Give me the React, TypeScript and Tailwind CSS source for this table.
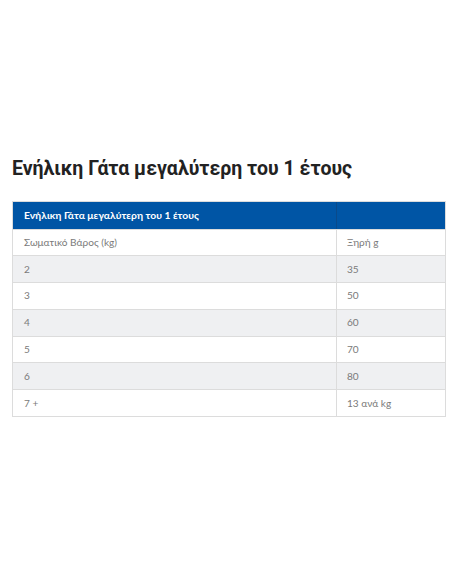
import React from "react";

const rows: [string, string][] = [
  ["2", "35"],
  ["3", "50"],
  ["4", "60"],
  ["5", "70"],
  ["6", "80"],
  ["7 +", "13 ανά kg"],
];

export default function App() {
  return (
    <div className="w-[452px] h-[584px] bg-white overflow-hidden">
      <div className="pt-[157px] px-[12px]">
        <h1
          className="text-[19.5px] leading-[24px] font-bold text-[#222222]"
          style={{ fontFamily: "Roboto, 'Liberation Sans', sans-serif" }}
        >
          Ενήλικη Γάτα μεγαλύτερη του 1 έτους
        </h1>
        <div
          className="mt-[20px] w-[434px] border border-[#dcdcdc]"
          style={{ fontFamily: "Lato, 'Liberation Sans', sans-serif" }}
        >
          <div className="flex h-[26.5px] bg-[#0055a5]">
            <div className="w-[324px] border-r border-[#0a4a8a] flex items-center pl-[11px] text-[10.3px] font-bold text-white">
              Ενήλικη Γάτα μεγαλύτερη του 1 έτους
            </div>
            <div className="flex-1" />
          </div>
          <div className="flex h-[26.8px] bg-white border-t border-[#dcdcdc] text-[10.1px] text-[#7a7a7a]">
            <div className="w-[324px] border-r border-[#dcdcdc] flex items-center pl-[11px]">
              Σωματικό Βάρος (kg)
            </div>
            <div className="flex-1 flex items-center pl-[10px]">Ξηρή g</div>
          </div>
          {rows.map(([a, b], i) => (
            <div
              key={a}
              className={
                "flex h-[26.8px] border-t border-[#dcdcdc] text-[10.1px] text-[#7a7a7a] " +
                (i % 2 === 0 ? "bg-[#eff0f2]" : "bg-white")
              }
            >
              <div className="w-[324px] border-r border-[#dcdcdc] flex items-center pl-[11px]">
                {a}
              </div>
              <div className="flex-1 flex items-center pl-[10px]">{b}</div>
            </div>
          ))}
        </div>
      </div>
    </div>
  );
}
